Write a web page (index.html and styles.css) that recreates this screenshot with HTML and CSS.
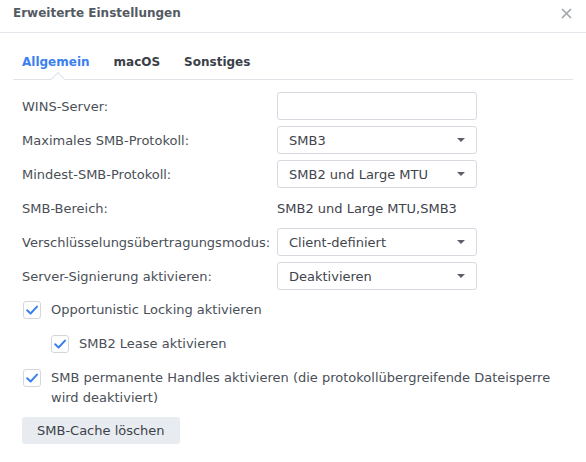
FILE: index.html
```html
<!DOCTYPE html>
<html lang="de">
<head>
<meta charset="utf-8">
<link rel="stylesheet" href="styles.css">
</head>
<body>
<div class="dialog">
  <div class="header">
    <span class="title">Erweiterte Einstellungen</span>
    <svg class="close" width="11" height="11" viewBox="0 0 11 11"><path d="M1 1L10 10M10 1L1 10" stroke="#a3a7ad" stroke-width="1.7" fill="none"/></svg>
  </div>
  <div class="body">
    <div class="tabs">
      <div class="tab active">Allgemein<span class="notch"></span></div>
      <div class="tab">macOS</div>
      <div class="tab">Sonstiges</div>
    </div>
    <div class="form">
      <div class="row"><span class="label">WINS-Server:</span><div class="field input"></div></div>
      <div class="row"><span class="label">Maximales SMB-Protokoll:</span><div class="field select">SMB3<span class="caret"></span></div></div>
      <div class="row"><span class="label">Mindest-SMB-Protokoll:</span><div class="field select">SMB2 und Large MTU<span class="caret"></span></div></div>
      <div class="row"><span class="label">SMB-Bereich:</span><div class="value">SMB2 und Large MTU,SMB3</div></div>
      <div class="row"><span class="label">Verschlüsselungsübertragungsmodus:</span><div class="field select">Client-definiert<span class="caret"></span></div></div>
      <div class="row"><span class="label">Server-Signierung aktivieren:</span><div class="field select">Deaktivieren<span class="caret"></span></div></div>
    </div>
    <div class="checks">
      <div class="check"><span class="box"><svg width="16" height="16" viewBox="0 0 16 16"><path d="M3.2 8.2L6.6 11.5L13 4.6" stroke="#3b80f0" stroke-width="2" fill="none" stroke-linecap="round" stroke-linejoin="round"/></svg></span><span class="ctext">Opportunistic Locking aktivieren</span></div>
      <div class="check nested"><span class="box"><svg width="16" height="16" viewBox="0 0 16 16"><path d="M3.2 8.2L6.6 11.5L13 4.6" stroke="#3b80f0" stroke-width="2" fill="none" stroke-linecap="round" stroke-linejoin="round"/></svg></span><span class="ctext">SMB2 Lease aktivieren</span></div>
      <div class="check multi"><span class="box"><svg width="16" height="16" viewBox="0 0 16 16"><path d="M3.2 8.2L6.6 11.5L13 4.6" stroke="#3b80f0" stroke-width="2" fill="none" stroke-linecap="round" stroke-linejoin="round"/></svg></span><span class="ctext">SMB permanente Handles aktivieren (die protokollübergreifende Dateisperre wird deaktiviert)</span></div>
    </div>
    <button class="btn">SMB-Cache löschen</button>
  </div>
</div>
</body>
</html>
```

FILE: styles.css
```css
html, body {
  margin: 0;
  padding: 0;
  background: #ffffff;
}
body {
  font-family: "DejaVu Sans", Verdana, sans-serif;
  font-size: 13px;
  color: #4a4f57;
}
.dialog {
  width: 586px;
}
.header {
  height: 33px;
  border-bottom: 1px solid #e4e7eb;
  display: flex;
  align-items: center;
  justify-content: space-between;
  padding: 0 14px 6px 13px;
  box-sizing: border-box;
}
.title {
  font-weight: bold;
  color: #545a63;
  font-size: 12px;
}
.close {
  margin-top: 1px;
}
.body {
  padding: 0 13px;
}
.tabs {
  display: flex;
  height: 46px;
  border-bottom: 1px solid #dfe3e8;
}
.tab {
  position: relative;
  padding: 11px 12px 0 9px;
  font-size: 12px;
  font-weight: bold;
  color: #3b4048;
  height: 100%;
  display: flex;
  align-items: center;
  box-sizing: border-box;
}
.tab + .tab {
  padding-left: 12px;
}
.tab.active {
  color: #3a80ee;
}
.notch {
  position: absolute;
  bottom: -5px;
  left: 50%;
  margin-left: -4px;
  width: 9px;
  height: 9px;
  background: #fff;
  border-top: 1px solid #dfe3e8;
  border-left: 1px solid #dfe3e8;
  transform: rotate(45deg);
}
.form {
  padding-top: 12px;
  display: flex;
  flex-direction: column;
  gap: 6px;
}
.row {
  display: flex;
  align-items: center;
  height: 28px;
  padding-left: 9px;
}
.label {
  width: 255px;
  flex: none;
}
.field {
  width: 200px;
  height: 28px;
  box-sizing: border-box;
  border: 1px solid #d6dae0;
  border-radius: 3px;
  background: #fff;
}
.select {
  display: flex;
  align-items: center;
  padding-left: 11px;
  position: relative;
  color: #3f444c;
}
.caret {
  position: absolute;
  right: 11px;
  top: 11px;
  width: 0;
  height: 0;
  border-left: 4px solid transparent;
  border-right: 4px solid transparent;
  border-top: 4px solid #5b6068;
}
.value {
  color: #3f444c;
}
.checks {
  padding-top: 6px;
  display: flex;
  flex-direction: column;
}
.check {
  display: flex;
  align-items: center;
  height: 28px;
  padding-left: 10px;
  margin-bottom: 6px;
}
.check.nested {
  padding-left: 38px;
}
.check.multi {
  align-items: flex-start;
  height: auto;
  padding-top: 5px;
  margin-bottom: 0;
}
.box {
  width: 18px;
  height: 18px;
  box-sizing: border-box;
  border: 1px solid #d3d7dd;
  border-radius: 3px;
  display: flex;
  align-items: center;
  justify-content: center;
  flex: none;
  margin-right: 10px;
  background: #fff;
}
.ctext {
  line-height: 20px;
}
.multi .ctext {
  margin-top: -1px;
  width: 510px;
}
.btn {
  margin-top: 9px;
  margin-left: 9px;
  height: 27px;
  padding: 0 15px;
  border: none;
  border-radius: 3px;
  background: #e8ebef;
  font-family: inherit;
  font-size: 13px;
  color: #3c424a;
}
```
